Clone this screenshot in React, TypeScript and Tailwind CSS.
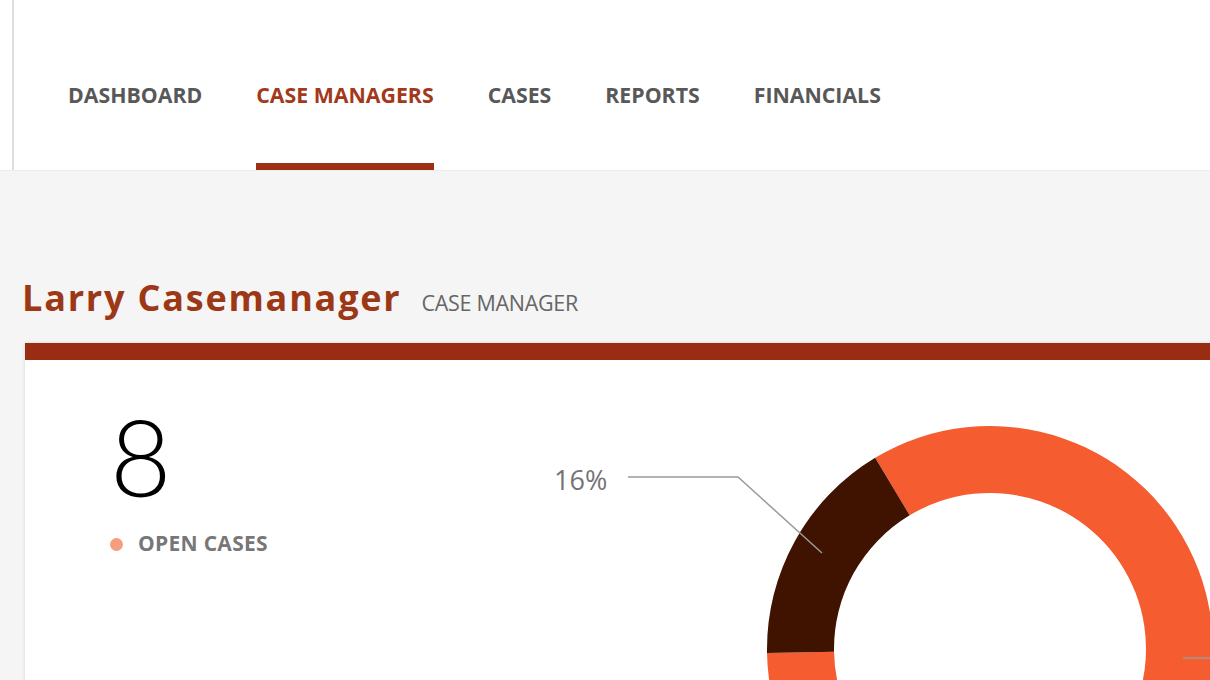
const tabs = ["DASHBOARD", "CASE MANAGERS", "CASES", "REPORTS", "FINANCIALS"];
const active = "CASE MANAGERS";

// ring chart, angles in degrees clockwise from 12 o'clock
const cx = 450;
const cy = 269;
const outer = 223;
const inner = 156;
const segments = [
  { from: 329, to: 360 + 269, color: "#f55c30" },
  { from: 269, to: 329, color: "#3f1300" },
];

function pt(angle: number, r: number) {
  const a = (angle * Math.PI) / 180;
  return `${cx + r * Math.sin(a)} ${cy - r * Math.cos(a)}`;
}

function ring(from: number, to: number) {
  const large = to - from > 180 ? 1 : 0;
  return [
    `M ${pt(from, outer)}`,
    `A ${outer} ${outer} 0 ${large} 1 ${pt(to, outer)}`,
    `L ${pt(to, inner)}`,
    `A ${inner} ${inner} 0 ${large} 0 ${pt(from, inner)}`,
    "Z",
  ].join(" ");
}

function Donut() {
  return (
    <svg width="700" height="320" viewBox="0 0 700 320" className="shrink-0 mt-[20px]">
      {segments.map((s) => (
        <path key={s.from} d={ring(s.from, s.to)} fill={s.color} />
      ))}
      <polyline points="88,97 198,97 282,173" fill="none" stroke="#9a9a9a" strokeWidth="1.5" />
      <line x1="643" y1="278" x2="680" y2="278" stroke="#9a9a9a" strokeWidth="1.5" />
      <text
        x="14"
        y="110"
        fill="#747474"
        fontSize="27"
        fontFamily="'Open Sans', sans-serif"
      >
        16%
      </text>
    </svg>
  );
}

export default function App() {
  return (
    <div className="w-[1210px] h-[680px] overflow-hidden bg-[#f5f5f5] font-['Open_Sans',sans-serif]">
      <header className="h-[171px] bg-white pl-3 border-b border-[#ececec]">
        <nav className="h-full border-l-2 border-[#dedede] flex items-stretch gap-[54px] pl-[54px]">
          {tabs.map((t) => (
            <div key={t} className="relative flex items-center">
              <span
                className={`text-[21.3px] font-bold pt-[20px] ${
                  t === active ? "text-[#a3391b]" : "text-[#585858]"
                }`}
              >
                {t}
              </span>
              {t === active && (
                <div className="absolute left-0 right-0 bottom-0 h-[7px] bg-[#9d2f14]" />
              )}
            </div>
          ))}
        </nav>
      </header>

      <main className="pl-[22px] pt-[109px]">
        <div className="flex items-baseline gap-[20px]">
          <h1 className="text-[36px] font-bold tracking-[1.8px] text-[#9c3816] leading-none">
            Larry Casemanager
          </h1>
          <span className="text-[21.5px] text-[#666] tracking-[-0.3px]">CASE MANAGER</span>
        </div>

        <section className="mt-[24px] ml-[3px] w-[1300px] bg-white shadow-[0_0_4px_rgba(0,0,0,0.12)]">
          <div className="h-[17px] bg-[#992d13]" />
          <div className="flex">
            <div className="w-[515px] shrink-0 pl-[85px] pt-[43px]">
              <div className="font-['Lato',sans-serif] font-light text-[106px] leading-none text-black">
                8
              </div>
              <div className="mt-[19px] flex items-center gap-[15px]">
                <span className="w-[13px] h-[13px] rounded-full bg-[#f59e7d]" />
                <span className="text-[21px] font-bold text-[#777] tracking-[0.3px]">OPEN CASES</span>
              </div>
              <div className="mt-[104px] font-['Lato',sans-serif] font-light text-[106px] leading-none text-black">
                12
              </div>
            </div>
            <Donut />
          </div>
        </section>
      </main>
    </div>
  );
}
